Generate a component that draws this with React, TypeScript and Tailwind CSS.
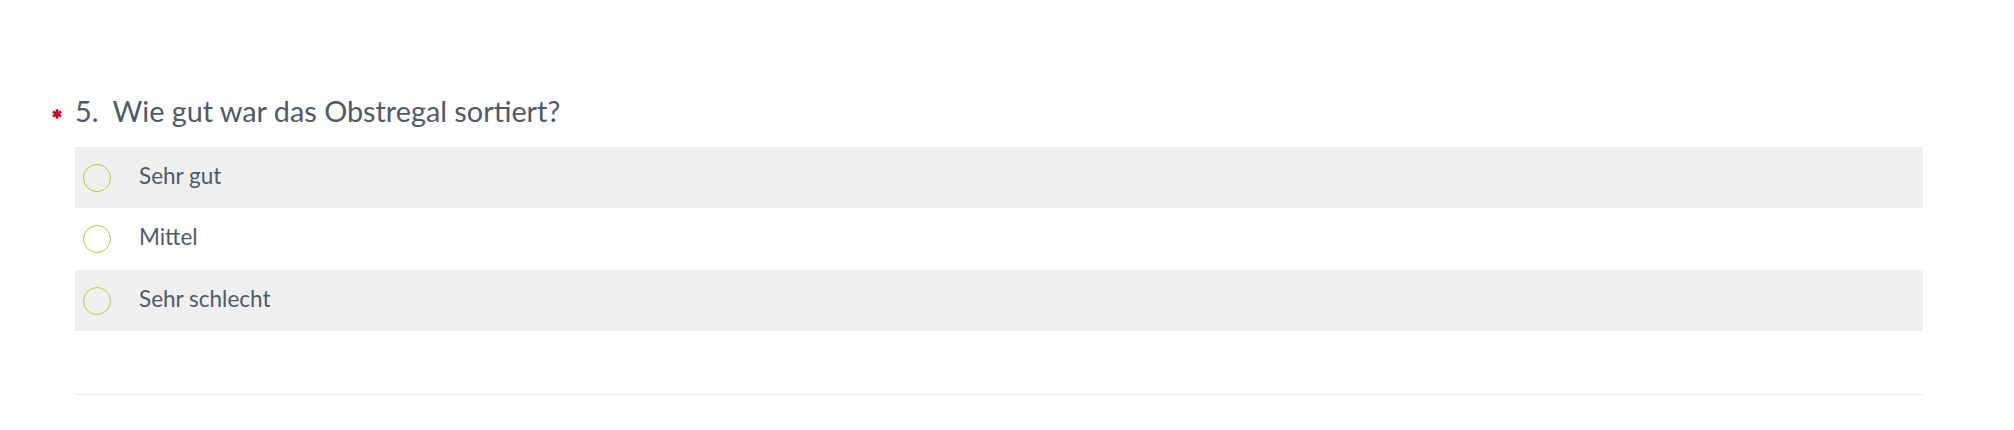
const options = ["Sehr gut", "Mittel", "Sehr schlecht"];

function Asterisk() {
  return (
    <svg width="10" height="10" viewBox="0 0 10 10" className="shrink-0">
      <g stroke="#d0021b" strokeWidth="2.6" strokeLinecap="butt">
        <line x1="5" y1="0.3" x2="5" y2="9.7" />
        <line x1="0.9" y1="2.65" x2="9.1" y2="7.35" />
        <line x1="0.9" y1="7.35" x2="9.1" y2="2.65" />
      </g>
    </svg>
  );
}

export default function App() {
  return (
    <div className="h-[430px] w-full bg-white font-['Lato',sans-serif] text-[#4f5968]">
      <div className="pl-[75px] pr-[91px] pt-[93px]">
        <div className="relative flex h-[36px] items-center">
          <div className="absolute left-[-23px] top-[16px]">
            <Asterisk />
          </div>
          <h2 className="text-[28.8px] leading-[36px] font-normal">
            <span className="mr-[14px]">5.</span>
            Wie gut war das Obstregal sortiert?
          </h2>
        </div>
        <div className="mt-[18px]">
          {options.map((label, i) => (
            <label
              key={label}
              className={`flex cursor-pointer items-center pb-[4px] pl-[8px] ${i === 1 ? "h-[62px] bg-white" : "h-[61px] bg-[#efefef]"}`}
            >
              <span className="mt-[4px] h-[28px] w-[28px] shrink-0 rounded-full border-[1.5px] border-[#a8d530] bg-transparent" />
              <span className="ml-[28px] text-[22.5px] leading-[28px] font-normal">{label}</span>
            </label>
          ))}
        </div>
        <div className="mt-[63px] h-px bg-[#ebebeb]" />
      </div>
    </div>
  );
}
